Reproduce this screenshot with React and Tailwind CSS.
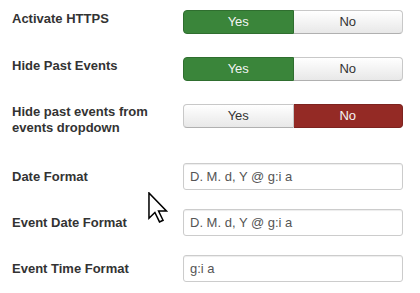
import React from "react";

const font = { fontFamily: '"Liberation Sans", Arial, sans-serif' };

function YesNo({ value }) {
  const base =
    "flex-1 flex items-center justify-center h-[24px] text-[13px] border";
  const yesActive = value === "yes";
  return (
    <div className="flex w-[220px] h-[24px] shrink-0">
      <div
        className={
          base +
          " rounded-l-[4px] " +
          (yesActive
            ? "bg-[#3a853a] border-[#2f6e2f] text-[#f4f4f4]"
            : "bg-gradient-to-b from-[#ffffff] to-[#e8e8e8] border-[#c8c8c8] border-b-[#b0b0b0] text-[#333]")
        }
      >
        Yes
      </div>
      <div
        className={
          base +
          " rounded-r-[4px] border-l-0 " +
          (!yesActive
            ? "bg-[#942a25] border-[#7d231f] text-[#f4f4f4]"
            : "bg-gradient-to-b from-[#ffffff] to-[#e8e8e8] border-[#c8c8c8] border-b-[#b0b0b0] text-[#333]")
        }
      >
        No
      </div>
    </div>
  );
}

function Label({ children, className = "" }) {
  return (
    <div
      className={
        "w-[171px] shrink-0 text-[13px] leading-[16px] font-bold text-[#333] " +
        className
      }
    >
      {children}
    </div>
  );
}

function TextRow({ label, value, className = "" }) {
  return (
    <div className={"flex items-start " + className}>
      <Label className="mt-[6px]">{label}</Label>
      <div className="w-[220px] h-[27px] shrink-0 flex items-center border border-[#cccccc] rounded-[3px] bg-white px-[6px] text-[13px] text-[#555] shadow-[inset_0_1px_1px_rgba(0,0,0,0.075)]">
        {value}
      </div>
    </div>
  );
}

export default function App() {
  return (
    <div
      className="relative w-[420px] h-[293px] bg-white overflow-hidden pl-[12px] pt-[10px]"
      style={font}
    >
      <div className="flex items-start mb-[23px]">
        <Label className="mt-px">Activate HTTPS</Label>
        <YesNo value="yes" />
      </div>
      <div className="flex items-start mb-[23px]">
        <Label className="mt-px">Hide Past Events</Label>
        <YesNo value="yes" />
      </div>
      <div className="flex items-start h-[33px] mb-[26px]">
        <Label className="mt-0">
          Hide past events from
          <br />
          events dropdown
        </Label>
        <YesNo value="no" />
      </div>
      <TextRow label="Date Format" value="D. M. d, Y @ g:i a" className="mb-[19px]" />
      <TextRow label="Event Date Format" value="D. M. d, Y @ g:i a" className="mb-[19px]" />
      <TextRow label="Event Time Format" value="g:i a" />

      <svg
        className="absolute left-[148px] top-[192px]"
        width="20"
        height="31"
        viewBox="0 0 12.5 19.4"
      >
        <path
          d="M0.6 0.6 L0.6 16.4 L4.3 12.8 L7.2 18.7 L9.4 17.7 L6.6 11.9 L11.5 11.9 Z"
          fill="#ffffff"
          stroke="#000000"
          strokeWidth="0.95"
          strokeLinejoin="miter"
        />
      </svg>
    </div>
  );
}
